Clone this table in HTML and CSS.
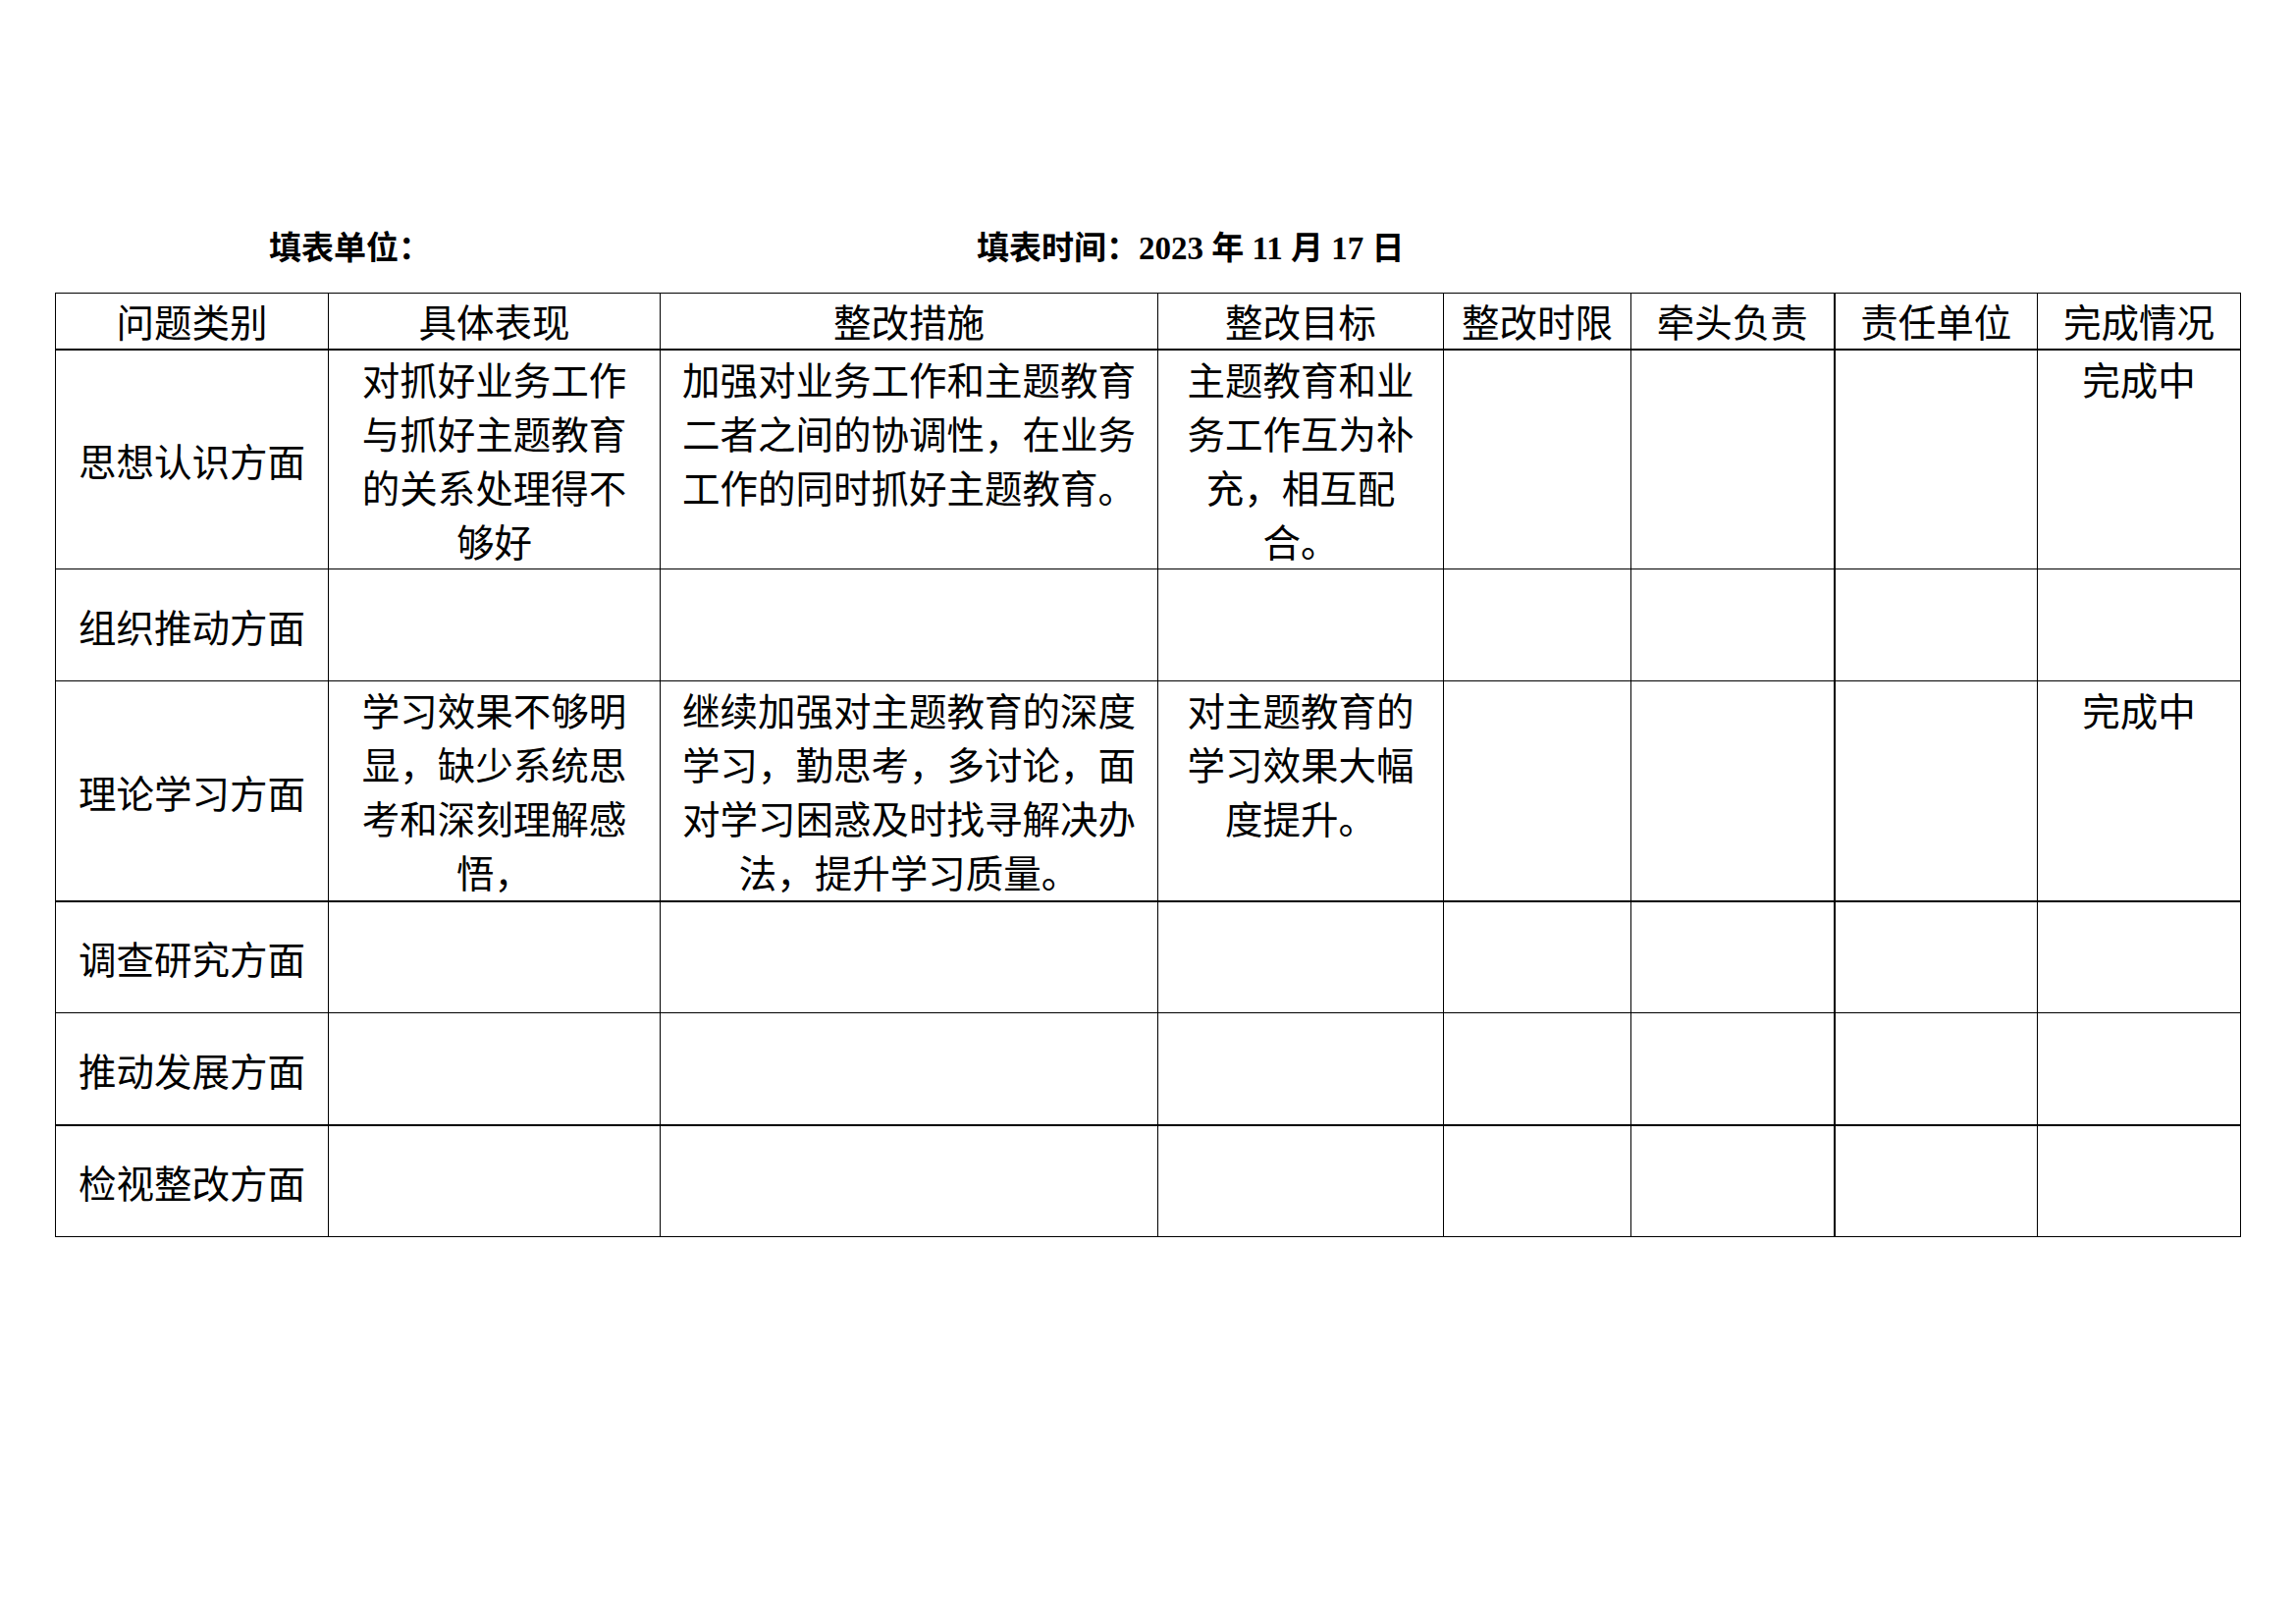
FILE: index.html
```html
<!DOCTYPE html>
<html lang="zh-CN">
<head>
<meta charset="utf-8">
<title>整改清单</title>
<link rel="stylesheet" href="styles.css">
</head>
<body>
<div class="page">
  <div class="meta">
    <span class="meta-unit">填表单位：</span>
    <span class="meta-date">填表时间：<span class="num">2023 </span>年<span class="num"> 11 </span>月<span class="num"> 17 </span>日</span>
  </div>
  <table class="sheet">
    <colgroup>
      <col class="w-cat">
      <col class="w-desc">
      <col class="w-measure">
      <col class="w-goal">
      <col class="w-small">
      <col class="w-mid">
      <col class="w-mid">
      <col class="w-mid">
    </colgroup>
    <thead>
      <tr class="head-row">
        <th>问题类别</th>
        <th>具体表现</th>
        <th>整改措施</th>
        <th>整改目标</th>
        <th>整改时限</th>
        <th>牵头负责</th>
        <th class="thick-left">责任单位</th>
        <th>完成情况</th>
      </tr>
    </thead>
    <tbody>
      <tr class="row-tall">
        <td class="cat">思想认识方面</td>
        <td>对抓好业务工作与抓好主题教育的关系处理得不够好</td>
        <td>加强对业务工作和主题教育二者之间的协调性，在业务工作的同时抓好主题教育。</td>
        <td>主题教育和业务工作互为补充，相互配合。</td>
        <td></td>
        <td></td>
        <td class="thick-left"></td>
        <td>完成中</td>
      </tr>
      <tr class="row-short">
        <td class="cat">组织推动方面</td>
        <td></td><td></td><td></td><td></td><td></td><td class="thick-left"></td><td></td>
      </tr>
      <tr class="row-tall thick-bottom">
        <td class="cat">理论学习方面</td>
        <td>学习效果不够明显，缺少系统思考和深刻理解感悟，</td>
        <td>继续加强对主题教育的深度学习，勤思考，多讨论，面对学习困惑及时找寻解决办法，提升学习质量。</td>
        <td>对主题教育的学习效果大幅度提升。</td>
        <td></td>
        <td></td>
        <td class="thick-left"></td>
        <td>完成中</td>
      </tr>
      <tr class="row-short">
        <td class="cat">调查研究方面</td>
        <td></td><td></td><td></td><td></td><td></td><td class="thick-left"></td><td></td>
      </tr>
      <tr class="row-short thick-bottom">
        <td class="cat">推动发展方面</td>
        <td></td><td></td><td></td><td></td><td></td><td class="thick-left"></td><td></td>
      </tr>
      <tr class="row-short">
        <td class="cat">检视整改方面</td>
        <td></td><td></td><td></td><td></td><td></td><td class="thick-left"></td><td></td>
      </tr>
    </tbody>
  </table>
</div>
</body>
</html>
```

FILE: styles.css
```css
html, body {
  margin: 0;
  padding: 0;
  background: #ffffff;
}

body {
  width: 2339px;
  min-height: 1654px;
  color: #000000;
  font-family: "Noto Sans CJK SC", "Noto Sans", sans-serif;
}

.page {
  padding: 230px 0 0 56px;
}

.meta {
  display: flex;
  align-items: baseline;
  height: 40px;
  line-height: 40px;
  margin-bottom: 28px;
  font-size: 33px;
  font-weight: 700;
  white-space: nowrap;
}

.meta-unit {
  margin-left: 218px;
  width: 165px;
}

.meta-date {
  margin-left: 556px;
}

.num {
  font-family: "Liberation Serif", "Times New Roman", serif;
  font-weight: 700;
  white-space: pre;
}

.sheet {
  border-collapse: collapse;
  table-layout: fixed;
  width: 2226px;
  font-size: 38.5px;
  line-height: 55px;
}

.w-cat { width: 278px; }
.w-desc { width: 338px; }
.w-measure { width: 507px; }
.w-goal { width: 291px; }
.w-small { width: 191px; }
.w-mid { width: 207px; }

.sheet th,
.sheet td {
  border: 1px solid #000000;
  padding: 1px 18px 0;
  text-align: center;
  vertical-align: top;
  font-weight: 400;
  overflow: hidden;
}

.sheet th {
  vertical-align: middle;
  padding: 0 10px;
  white-space: nowrap;
  border-bottom-width: 2px;
}

.sheet td.cat {
  vertical-align: middle;
  padding: 2px 10px 0;
  white-space: nowrap;
}

.head-row { height: 57px; }
.row-tall { height: 224px; }
.row-short { height: 114px; }

.thick-bottom td {
  border-bottom-width: 2px;
}

.sheet .thick-left {
  border-left-width: 2px;
}
```
